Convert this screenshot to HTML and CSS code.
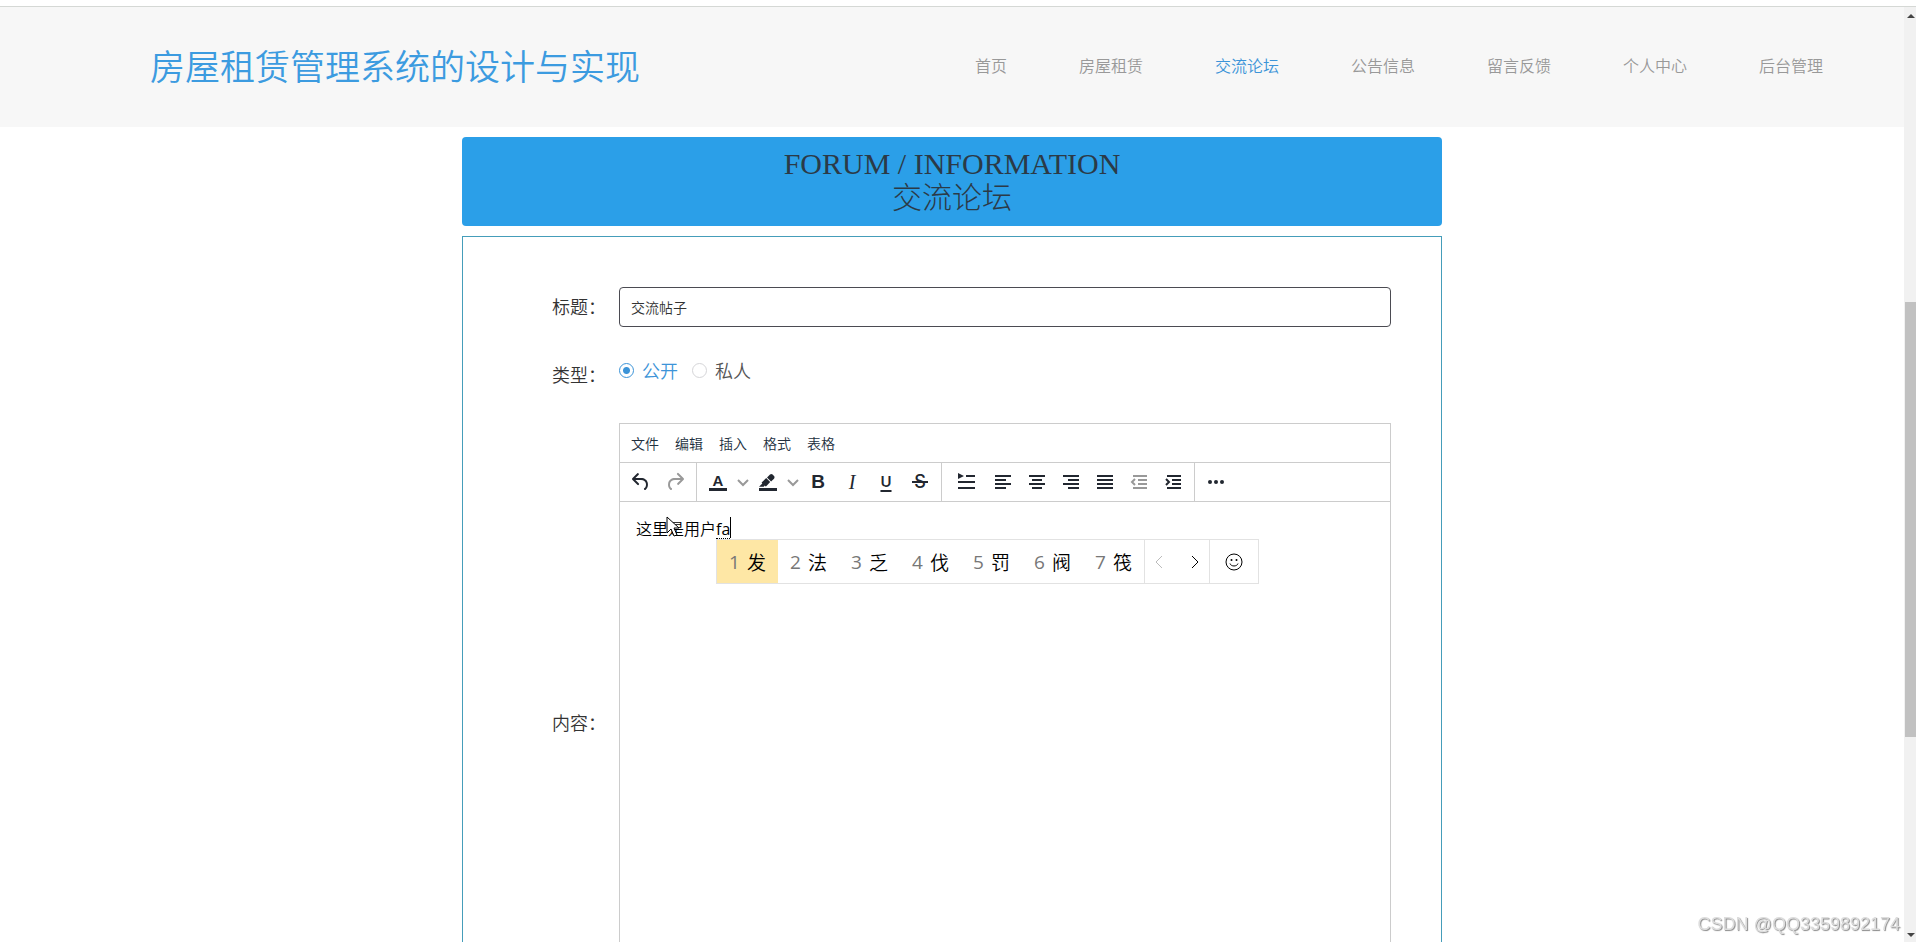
FILE: index.html
```html
<!DOCTYPE html>
<html lang="zh-CN">
<head>
<meta charset="utf-8">
<title>房屋租赁管理系统的设计与实现</title>
<link rel="stylesheet" href="styles.css">
</head>
<body>
<div class="window">
  <div class="page">
    <header class="header">
      <h1 class="logo">房屋租赁管理系统的设计与实现</h1>
      <nav class="nav">
        <a href="#">首页</a>
        <a href="#">房屋租赁</a>
        <a href="#" class="active">交流论坛</a>
        <a href="#">公告信息</a>
        <a href="#">留言反馈</a>
        <a href="#">个人中心</a>
        <a href="#">后台管理</a>
      </nav>
    </header>
    <main class="main">
      <h2 class="banner"><span>FORUM / INFORMATION</span><span class="banner-sub">交流论坛</span></h2>
      <form class="form">
        <div class="row">
          <label class="label" for="title">标题：</label>
          <input class="text-input" id="title" type="text" value="交流帖子">
        </div>
        <div class="row">
          <span class="label" id="type-label">类型：</span>
          <div class="radios" role="radiogroup" aria-labelledby="type-label">
            <label class="radio"><input type="radio" name="type" checked><span>公开</span></label>
            <label class="radio"><input type="radio" name="type"><span>私人</span></label>
          </div>
        </div>
        <div class="row">
          <span class="label" id="content-label">内容：</span>
          <div class="editor">
            <div class="menubar">
              <button type="button">文件</button>
              <button type="button">编辑</button>
              <button type="button">插入</button>
              <button type="button">格式</button>
              <button type="button">表格</button>
            </div>
            <div class="toolbar">
              <div class="group">
                <button type="button" class="tool" aria-label="撤销"><svg viewBox="0 0 24 24"><path d="M6.4 8H12c3.7 0 6.2 2 6.8 5.1.6 2.7-.4 5.6-2.3 6.8a1 1 0 0 1-1-1.8c1.1-.6 1.8-2.7 1.4-4.6-.5-2.1-2.1-3.5-4.9-3.5H6.4l3.3 3.3a1 1 0 1 1-1.4 1.4l-5-5a1 1 0 0 1 0-1.4l5-5a1 1 0 0 1 1.4 1.4L6.4 8Z"/></svg></button>
                <button type="button" class="tool" disabled aria-label="重做"><svg viewBox="0 0 24 24"><path d="M17.6 10H12c-2.8 0-4.4 1.4-4.9 3.5-.4 2 .3 4 1.4 4.6a1 1 0 1 1-1 1.8c-2-1.2-2.9-4.1-2.3-6.8.6-3 3-5.1 6.8-5.1h5.6l-3.3-3.3a1 1 0 1 1 1.4-1.4l5 5a1 1 0 0 1 0 1.4l-5 5a1 1 0 0 1-1.4-1.4l3.3-3.3Z"/></svg></button>
              </div>
              <div class="group">
                <button type="button" class="tool" aria-label="文字颜色"><span class="color-letter">A</span></button>
                <button type="button" class="tool arrow" aria-label="选择文字颜色"><svg viewBox="0 0 12 12"><path class="line" d="M1 4l5 5 5-5"/></svg></button>
                <button type="button" class="tool" aria-label="背景颜色"><svg viewBox="0 0 24 24"><path d="M3 18h18v3H3zM7.7 16.7H3l3.3-3.3-.7-.8L10.2 8l4 4.1-4 4.2c-.2.2-.6.2-.8 0l-.6-.7-1.1 1.1zm5-7.5L11 7.4l3-2.9a2 2 0 0 1 2.6 0L18 6c.7.7.7 2 0 2.7l-2.9 2.9-1.8-1.8-.5-.6"/></svg></button>
                <button type="button" class="tool arrow" aria-label="选择背景颜色"><svg viewBox="0 0 12 12"><path class="line" d="M1 4l5 5 5-5"/></svg></button>
                <button type="button" class="tool bold" aria-label="粗体">B</button>
                <button type="button" class="tool italic" aria-label="斜体">I</button>
                <button type="button" class="tool underline" aria-label="下划线">U</button>
                <button type="button" class="tool strike" aria-label="删除线">S</button>
              </div>
              <div class="group">
                <button type="button" class="tool wide" aria-label="首行缩进"><svg viewBox="0 0 24 24"><path d="M4 3l6 3-6 3zM12 5h9v2h-9zM4 11h17v2H4zM4 17h17v2H4z"/></svg></button>
                <button type="button" class="tool" aria-label="左对齐"><svg viewBox="0 0 24 24"><path d="M4 5h16v2H4zM4 9h11v2H4zM4 13h16v2H4zM4 17h11v2H4z"/></svg></button>
                <button type="button" class="tool" aria-label="居中"><svg viewBox="0 0 24 24"><path d="M4 5h16v2H4zM7 9h10v2H7zM4 13h16v2H4zM7 17h10v2H7z"/></svg></button>
                <button type="button" class="tool" aria-label="右对齐"><svg viewBox="0 0 24 24"><path d="M4 5h16v2H4zM9 9h11v2H9zM4 13h16v2H4zM9 17h11v2H9z"/></svg></button>
                <button type="button" class="tool" aria-label="两端对齐"><svg viewBox="0 0 24 24"><path d="M4 5h16v2H4zM4 9h16v2H4zM4 13h16v2H4zM4 17h16v2H4z"/></svg></button>
                <button type="button" class="tool" disabled aria-label="减少缩进"><svg viewBox="0 0 24 24"><path d="M6 5h14v2H6zM11 9h9v2h-9zM11 13h9v2h-9zM6 17h14v2H6z"/><path class="line" d="M8 9l-3 3 3 3"/></svg></button>
                <button type="button" class="tool" aria-label="增加缩进"><svg viewBox="0 0 24 24"><path d="M6 5h14v2H6zM11 9h9v2h-9zM11 13h9v2h-9zM6 17h14v2H6z"/><path class="line" d="M5 9l3 3-3 3"/></svg></button>
              </div>
              <div class="group">
                <button type="button" class="tool" aria-label="更多"><svg viewBox="0 0 24 24"><circle cx="6" cy="12" r="2"/><circle cx="12" cy="12" r="2"/><circle cx="18" cy="12" r="2"/></svg></button>
              </div>
            </div>
            <div class="content" role="textbox" aria-labelledby="content-label">
              <p class="typed">这里是用户<span class="composing">fa</span><span class="caret"></span></p>
              <div class="ime">
                <button type="button" class="candidate selected"><span>1</span>发</button>
                <button type="button" class="candidate"><span>2</span>法</button>
                <button type="button" class="candidate"><span>3</span>乏</button>
                <button type="button" class="candidate"><span>4</span>伐</button>
                <button type="button" class="candidate"><span>5</span>罚</button>
                <button type="button" class="candidate"><span>6</span>阀</button>
                <button type="button" class="candidate"><span>7</span>筏</button>
                <div class="pager">
                  <button type="button" disabled aria-label="上一页"><svg viewBox="0 0 12 12"><path d="M9 0L3 6l6 6"/></svg></button>
                  <button type="button" aria-label="下一页"><svg viewBox="0 0 12 12"><path d="M3 0l6 6-6 6"/></svg></button>
                </div>
                <button type="button" class="emoji" aria-label="表情"><svg viewBox="0 0 18 18"><circle cx="9" cy="9" r="8"/><path d="M5 10.500c1 3.300 7 3.300 8 0"/><circle class="eye" cx="6.500" cy="7" r="1"/><circle class="eye" cx="11.500" cy="7" r="1"/></svg></button>
              </div>
              <svg class="pointer" viewBox="0 0 14 22"><path d="M1 1v16l4-4 3 7 3-1-3-7h5z"/></svg>
            </div>
          </div>
        </div>
      </form>
    </main>
  </div>
  <div class="scrollbar">
    <svg viewBox="0 0 12 8"><path d="M3 6l4-4 4 4z"/></svg>
    <div class="thumb"></div>
    <svg viewBox="0 0 12 8"><path d="M3 2l4 4 4-4z"/></svg>
  </div>
</div>
<div class="watermark">CSDN @QQ3359892174</div>
</body>
</html>
```
FILE: styles.css
```css
* { box-sizing: border-box; }

body {
  margin: 0;
  height: 100vh;
  overflow: hidden;
  padding-top: 6px;
  background: #fff;
  color: #333;
  font-family: "Open Sans", "Noto Sans CJK SC", sans-serif;
  font-weight: 350;
}

button {
  padding: 0;
  border: 0;
  background: none;
  color: inherit;
  font: inherit;
}

.window {
  display: flex;
  height: 100%;
  border-top: 1px solid #d5d8d5;
}

.page {
  flex: 1;
  overflow: hidden;
}

.header {
  display: flex;
  justify-content: space-between;
  align-items: center;
  height: 120px;
  padding: 0 81px 5px 150px;
  background: #f7f7f7;
}

.logo {
  margin: 0;
  color: #3c9be0;
  font: 350 35px/50px "Noto Sans CJK SC", sans-serif;
}

.nav {
  display: flex;
  gap: 72px;
}

.nav a {
  color: #999;
  font: 350 16px/24px "Noto Sans CJK SC", sans-serif;
  text-decoration: none;
}

.nav .active { color: #3c94d8; }

.main {
  max-width: 980px;
  margin: 10px auto 0;
}

.banner {
  display: flex;
  flex-direction: column;
  align-items: center;
  margin: 0 0 10px;
  padding: 10px 0 11px;
  border-radius: 4px;
  background: #2b9fe8;
  color: #2b3a47;
  font: 30px/34px "Liberation Serif", "Noto Sans CJK SC", serif;
}

.banner-sub { font-weight: 300; }

.form {
  display: flex;
  flex-direction: column;
  gap: 28px;
  padding: 50px;
  border: 1px solid #459dba;
}

.row {
  display: flex;
  align-items: center;
  min-height: 40px;
}

.label {
  flex: none;
  width: 106px;
  padding: 0 13px 2px 0;
  font: 350 18px/26px "Noto Sans CJK SC", sans-serif;
  text-align: right;
}

.text-input {
  flex: 1;
  height: 40px;
  padding: 0 11px;
  border: 1px solid #4b4b52;
  border-radius: 4px;
  color: #333;
  font: 350 14px/20px "Noto Sans CJK SC", sans-serif;
}

.radios {
  display: flex;
  gap: 14px;
  padding-bottom: 10px;
}

.radio {
  display: flex;
  align-items: center;
  gap: 8px;
  color: #555;
  font: 350 18px/26px "Noto Sans CJK SC", sans-serif;
}

.radio input {
  appearance: none;
  width: 15px;
  height: 15px;
  margin: 0;
  border: 1px solid #d5d5d8;
  border-radius: 50%;
}

.radio input:checked {
  border-color: #3c94d8;
  background: radial-gradient(#3c94d8 3px, transparent 4px);
}

.radio input:checked + span { color: #3c94d8; }

.editor {
  flex: 1;
  display: flex;
  flex-direction: column;
  height: 600px;
  border: 1px solid #ccc;
}

.menubar {
  display: flex;
  align-items: center;
  gap: 16px;
  height: 39px;
  padding: 0 11px;
  border-bottom: 1px solid #ccc;
  color: #222f3e;
  font: 350 14px/20px "Noto Sans CJK SC", sans-serif;
}

.toolbar {
  display: flex;
  height: 39px;
  border-bottom: 1px solid #ccc;
  color: #222730;
}

.group {
  display: flex;
  align-items: center;
  padding: 0 4px;
  border-right: 1px solid #ccc;
}

.group:last-child { border-right: 0; }

.tool {
  display: flex;
  justify-content: center;
  align-items: center;
  width: 34px;
  height: 34px;
}

.tool svg {
  width: 24px;
  height: 24px;
  fill: currentColor;
}

.tool .line {
  fill: none;
  stroke: currentColor;
  stroke-width: 2;
}

.tool:disabled { color: #999; }

.wide { width: 40px; }
.arrow { width: 16px; color: #999; }
.arrow svg { width: 12px; height: 12px; }

.color-letter {
  width: 18px;
  border-bottom: 3px solid #222730;
  font: bold 15px/15px "Liberation Sans", sans-serif;
}

.bold { font: bold 19px/24px "Liberation Sans", sans-serif; }
.italic { font: italic 20px/24px "Liberation Serif", serif; }

.underline {
  font: 600 15px/24px Inter, sans-serif;
  text-decoration: underline 2px;
  text-underline-offset: 3px;
}

.strike {
  background: linear-gradient(#222730, #222730) center / 16px 2px no-repeat;
  font: 500 18px/24px Inter, sans-serif;
}

.content {
  flex: 1;
  position: relative;
  padding: 15px 16px;
  color: #000;
}

.typed {
  display: flex;
  margin: 0;
  font-size: 16px;
  line-height: 24px;
}

.composing {
  height: 22px;
  border-bottom: 1px dotted #000;
  font-weight: 400;
}

.caret {
  width: 1px;
  height: 21px;
  background: #000;
}

.ime {
  position: absolute;
  top: 37px;
  left: 96px;
  display: flex;
  height: 45px;
  border: 1px solid #e2e2e2;
  background: #fff;
}

.candidate {
  display: flex;
  justify-content: center;
  align-items: center;
  gap: 7px;
  width: 61px;
  font-size: 19px;
}

.candidate span {
  color: #777;
  font-weight: 400;
}

.selected { background: #fee7a5; }

.pager {
  display: flex;
  align-items: center;
  gap: 24px;
  padding: 0 8px;
  border: solid #e2e2e2;
  border-width: 0 1px;
}

.pager button:disabled { color: #bbb; }

.ime svg {
  display: block;
  width: 12px;
  height: 12px;
  fill: none;
  stroke: currentColor;
}

.emoji { padding: 0 15px; }

.ime .emoji svg {
  width: 18px;
  height: 18px;
}

.ime .eye {
  fill: currentColor;
  stroke: none;
}

.pointer {
  position: absolute;
  top: 14px;
  left: 46px;
  width: 14px;
  height: 22px;
  fill: #fff;
  stroke: #000;
}

.scrollbar {
  display: flex;
  flex-direction: column;
  justify-content: space-between;
  width: 12px;
  padding: 5px 0 3px;
  background: #f1f1f1;
}

.scrollbar svg {
  width: 12px;
  height: 8px;
  fill: #444;
}

.thumb {
  height: 47%;
  margin: 88px 0 0 1px;
  background: #c1c1c1;
}

.watermark {
  position: fixed;
  right: 16px;
  bottom: 6px;
  color: #ddd;
  font: 18px/24px "Liberation Sans", sans-serif;
  text-shadow: 1px 1px 1px #888;
}
```
